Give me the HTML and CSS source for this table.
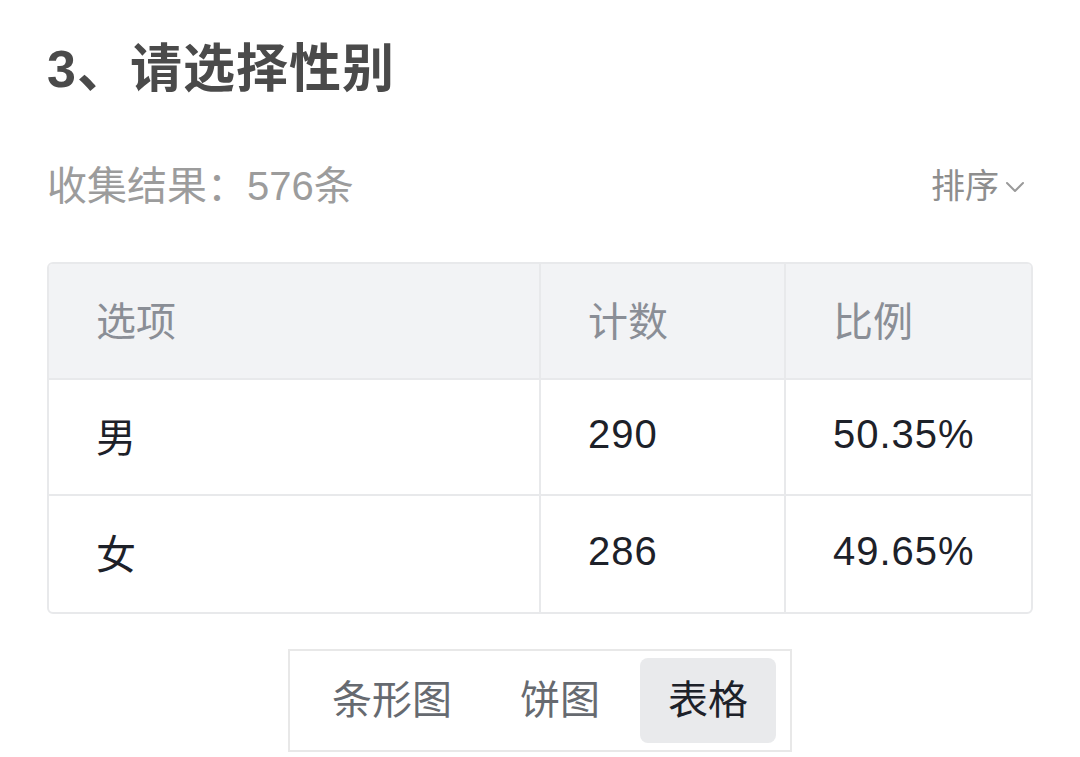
FILE: index.html
```html
<!DOCTYPE html>
<html lang="zh-CN">
<head>
<meta charset="utf-8">
<link rel="stylesheet" href="styles.css">
</head>
<body>
<div class="page">
  <h1 class="title">3、请选择性别</h1>
  <div class="meta">
    <span class="count">收集结果：576条</span>
    <span class="sort">排序<svg class="chev" width="20" height="12" viewBox="0 0 20 12"><path d="M2 2 L10 10 L18 2" fill="none" stroke="#9a9a9a" stroke-width="2" stroke-linecap="round" stroke-linejoin="round"/></svg></span>
  </div>
  <div class="table">
    <div class="cell head">选项</div>
    <div class="cell head">计数</div>
    <div class="cell head last">比例</div>
    <div class="cell">男</div>
    <div class="cell num">290</div>
    <div class="cell num last">50.35%</div>
    <div class="cell bottom">女</div>
    <div class="cell num bottom">286</div>
    <div class="cell num bottom last">49.65%</div>
  </div>
  <div class="tabs-wrap">
    <div class="tabs">
      <span class="tab">条形图</span>
      <span class="tab">饼图</span>
      <span class="tab active">表格</span>
    </div>
  </div>
</div>
</body>
</html>
```
FILE: styles.css
```css
html, body {
  margin: 0;
  padding: 0;
  background: #ffffff;
}
body {
  font-family: "Liberation Sans", "Noto Sans CJK SC", sans-serif;
}
.page {
  padding: 34px 47px 0 47px;
}
.title {
  margin: 0;
  font-size: 52px;
  line-height: 70px;
  font-weight: 700;
  letter-spacing: 1px;
  color: #4a4a4a;
}
.meta {
  margin-top: 54px;
  display: flex;
  justify-content: space-between;
  align-items: center;
  height: 56px;
}
.count {
  font-size: 40px;
  line-height: 56px;
  color: #9c9c9c;
}
.sort {
  display: flex;
  align-items: center;
  font-size: 34px;
  line-height: 56px;
  color: #8e8e8e;
  padding-right: 8px;
}
.chev {
  margin-left: 6px;
  margin-top: 2px;
}
.table {
  margin-top: 48px;
  display: grid;
  grid-template-columns: 492px 245px 1fr;
  border: 2px solid #e8e9eb;
  border-radius: 6px;
  overflow: hidden;
}
.cell {
  height: 116px;
  box-sizing: border-box;
  display: flex;
  align-items: center;
  padding-left: 47px;
  padding-bottom: 5px;
  font-size: 40px;
  color: #1d2129;
  border-right: 2px solid #e8e9eb;
  border-bottom: 2px solid #e8e9eb;
}
.cell.num {
  letter-spacing: 1px;
}
.cell.last {
  border-right: none;
}
.cell.bottom {
  border-bottom: none;
}
.cell.head {
  background: #f2f3f5;
  color: #8a8e96;
}
.tabs-wrap {
  margin-top: 35px;
  display: flex;
  justify-content: center;
}
.tabs {
  display: flex;
  gap: 12px;
  padding: 7px 14px;
  border: 2px solid #e8e8e8;
}
.tab {
  padding: 14px 28px;
  font-size: 40px;
  line-height: 57px;
  color: #666a70;
  border-radius: 8px;
}
.tab.active {
  background: #e9eaec;
  color: #1d2129;
}
```
